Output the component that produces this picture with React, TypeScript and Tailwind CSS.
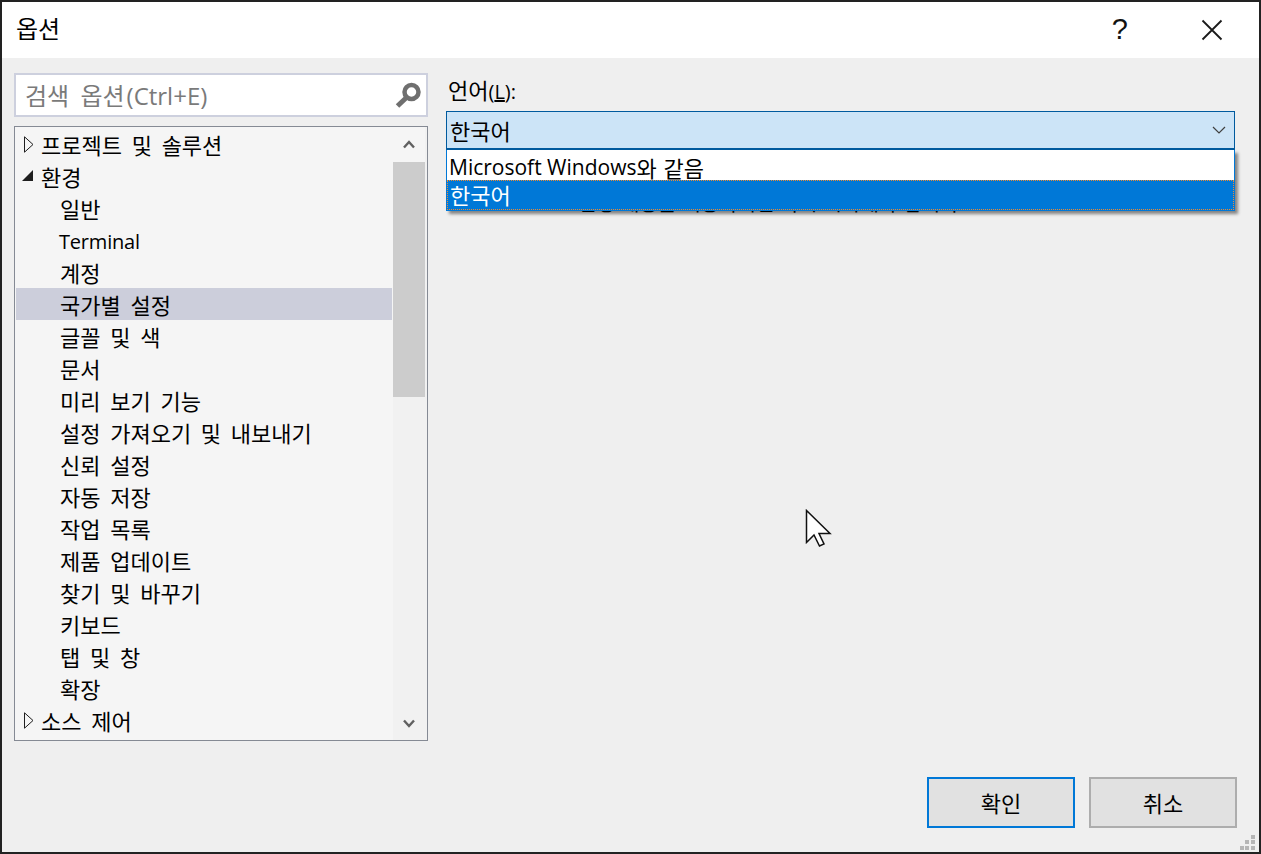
import React from 'react';

type Row = { label: string; depth: 0 | 1; arrow?: 'open' | 'closed'; selected?: boolean };

const rows: Row[] = [
  { label: '프로젝트 및 솔루션', depth: 0, arrow: 'closed' },
  { label: '환경', depth: 0, arrow: 'open' },
  { label: '일반', depth: 1 },
  { label: 'Terminal', depth: 1 },
  { label: '계정', depth: 1 },
  { label: '국가별 설정', depth: 1, selected: true },
  { label: '글꼴 및 색', depth: 1 },
  { label: '문서', depth: 1 },
  { label: '미리 보기 기능', depth: 1 },
  { label: '설정 가져오기 및 내보내기', depth: 1 },
  { label: '신뢰 설정', depth: 1 },
  { label: '자동 저장', depth: 1 },
  { label: '작업 목록', depth: 1 },
  { label: '제품 업데이트', depth: 1 },
  { label: '찾기 및 바꾸기', depth: 1 },
  { label: '키보드', depth: 1 },
  { label: '탭 및 창', depth: 1 },
  { label: '확장', depth: 1 },
  { label: '소스 제어', depth: 0, arrow: 'closed' },
];

const font = "font-['Open_Sans','Noto_Sans_CJK_KR',sans-serif]";

const Arrow = ({ kind }: { kind: 'open' | 'closed' }) =>
  kind === 'closed' ? (
    <svg width="10" height="17" viewBox="0 0 10 17" className="ml-[8px] mr-[7px] shrink-0 -mt-[2px]">
      <path d="M0.5 0.8 L9 8.5 L0.5 16.2 Z" fill="none" stroke="#1e1e1e" strokeWidth="1" />
    </svg>
  ) : (
    <svg width="11" height="11" viewBox="0 0 11 11" className="ml-[6px] mr-[8px] shrink-0 -mt-[3px]">
      <path d="M0 11 L11 11 L11 0 Z" fill="#1e1e1e" />
    </svg>
  );

const App: React.FC = () => {
  return (
    <div className={`${font} relative w-[1261px] h-[854px] border-2 border-[#222222] bg-[#efefef] text-[22px] text-black flex flex-col overflow-hidden [word-spacing:4px]`}>
      {/* 제목 표시줄 */}
      <div className="h-[56px] bg-white flex items-center shrink-0">
        <span className="ml-[14px] pb-[2px] text-[24px]">옵션</span>
        <span className="ml-auto text-[29px] text-[#111111] font-['Liberation_Sans',sans-serif]">?</span>
        <svg width="22" height="22" viewBox="0 0 22 22" className="ml-[73px] mr-[36px]">
          <path d="M1.5 1.5 L20.5 20.5 M20.5 1.5 L1.5 20.5" fill="none" stroke="#1a1a1a" strokeWidth="1.8" />
        </svg>
      </div>

      <div className="flex flex-1 min-h-0 pl-[12px] pt-[15px]">
        {/* 왼쪽 트리 */}
        <div className="w-[414px] shrink-0 flex flex-col gap-[9px]">
          <div className="h-[44px] border-2 border-[#cdd0de] bg-white flex items-center pl-[9px] pr-[4px] text-[#7a7a7a]">
            <span className="pt-[2px] text-[24px] [word-spacing:5px]">검색 옵션<span className="ml-[2px] text-[24px]">(Ctrl+E)</span></span>
            <svg width="28" height="28" viewBox="0 0 28 28" className="ml-auto">
              <circle cx="17.5" cy="11" r="7" fill="none" stroke="#6f6f6f" strokeWidth="4.5" />
              <path d="M12 17 L3.5 25" fill="none" stroke="#6f6f6f" strokeWidth="5" />
            </svg>
          </div>
          <div className="h-[615px] border border-[#858a94] bg-[#f5f5f5] flex">
            <div className="flex-1 pt-[1px] pl-[1px] pr-[1px]">
              {rows.map((r) => (
                <div
                  key={r.label}
                  className={`h-[32px] pt-[2px] flex items-center whitespace-nowrap ${r.selected ? 'bg-[#cccedb]' : ''} ${r.depth === 1 ? 'pl-[44px]' : ''}`}
                >
                  {r.arrow && <Arrow kind={r.arrow} />}
                  <span className={r.label === 'Terminal' ? 'text-[20px] -ml-[1px] pt-[2px] tracking-[-0.2px]' : ''}>{r.label}</span>
                </div>
              ))}
            </div>
            <div className="w-[34px] shrink-0 flex flex-col pb-[1px] bg-[#f1f1f1]">
              <div className="h-[35px] mr-[2px] bg-[#f5f5f5] flex items-center justify-center">
                <svg width="12" height="9" viewBox="0 0 12 9"><path d="M1 7.5 L6 2 L11 7.5" fill="none" stroke="#606060" strokeWidth="2.4" /></svg>
              </div>
              <div className="h-[235px] mr-[2px] bg-[#cccccc]" />
              <div className="flex-1" />
              <div className="h-[32px] mr-[2px] flex items-center justify-center">
                <svg width="12" height="9" viewBox="0 0 12 9"><path d="M1 1.5 L6 7 L11 1.5" fill="none" stroke="#606060" strokeWidth="2.4" /></svg>
              </div>
            </div>
          </div>
        </div>

        {/* 오른쪽 패널 */}
        <div className="flex-1 flex flex-col pl-[18px] pr-[24px]">
          <div className="h-[38px] pb-[4px] flex items-center pl-[2px]">
            <span>언어<span className="text-[20px]">(<u>L</u>):</span></span>
          </div>
          <div className="relative w-[789px] h-[39px] border-2 border-[#005a9e] border-t border-x bg-[#cce4f7] flex items-center pl-[3px] pt-[2px]">
            <span>한국어</span>
            <svg width="14" height="8" viewBox="0 0 14 8" className="ml-auto mr-[8px] -mt-[2px]"><path d="M1 1 L7 7 L13 1" fill="none" stroke="#404040" strokeWidth="1.2" /></svg>
          </div>
          <div className="mt-[41px] pl-[132px] text-[20px] leading-[26px] whitespace-nowrap [word-spacing:1px]">
            변경 내용을 적용하려면 다시 시작해야 합니다
          </div>
        </div>
      </div>

      {/* 언어 드롭다운 목록 */}
      <div className="absolute left-[444px] top-[148px] w-[789px] h-[61px] border border-[#0078d7] border-t-0 bg-white shadow-[3px_3px_3px_rgba(0,0,0,0.45)]">
        <div className="h-[30px] pt-[6px] flex items-center pl-[2px] whitespace-pre [word-spacing:1px]"><span className="text-[21px] [word-spacing:0px]">Microsoft Windows</span>와 같음</div>
        <div className="h-[30px] pt-[1px] bg-[#0078d7] text-white flex items-center pl-[2px] border border-dotted border-[#f08a30]">한국어</div>
      </div>

      {/* 마우스 커서 */}
      <svg width="28" height="40" viewBox="0 0 28 40" className="absolute left-[803px] top-[507px]">
        <path d="M1.5 1.5 V33.5 L9 26 L14.5 37 L19 35 L14 24.5 H25 Z" fill="white" stroke="#111111" strokeWidth="1.5" />
      </svg>

      {/* 하단 버튼 */}
      <div className="absolute left-[925px] top-[775px] flex gap-[14px]">
        <button className="w-[148px] h-[51px] pt-[2px] border-2 border-[#0078d7] bg-[#e1e1e1]">확인</button>
        <button className="w-[148px] h-[51px] pt-[2px] border-2 border-[#adadad] bg-[#e1e1e1]">취소</button>
      </div>

      {/* 크기 조절 그립 */}
      <svg width="16" height="16" viewBox="0 0 16 16" className="absolute right-[3px] bottom-[1px]" fill="#b5b5b5">
        <rect x="11" y="0" width="4" height="4" />
        <rect x="5" y="5" width="4" height="4" />
        <rect x="11" y="5" width="4" height="4" />
        <rect x="0" y="11" width="4" height="4" />
        <rect x="5" y="11" width="4" height="4" />
        <rect x="11" y="11" width="4" height="4" />
      </svg>
    </div>
  );
};

export default App;
